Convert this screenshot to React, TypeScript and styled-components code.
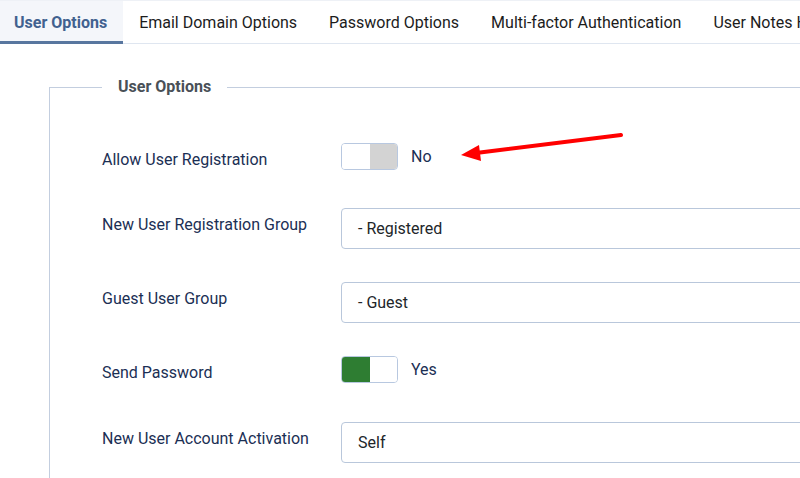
import React from "react";
import styled, { createGlobalStyle } from "styled-components";

const Global = createGlobalStyle`
  html, body { margin: 0; padding: 0; background: #fff; overflow: hidden; }
  body { font-family: Roboto, "Noto Sans", "Liberation Sans", sans-serif; }
  * { box-sizing: border-box; }
`;

const Page = styled.div`
  position: relative;
  width: 800px;
  height: 478px;
  overflow: hidden;
  background: #fff;
`;

const TabBar = styled.div`
  display: flex;
  flex-wrap: nowrap;
  height: 44px;
  border-top: 1px solid #eef1f6;
  border-bottom: 1px solid #dfe6f0;
  white-space: nowrap;
`;

const Tab = styled.div<{ $active?: boolean }>`
  flex: none;
  display: flex;
  align-items: center;
  padding: 3px 16px 0 ${(p) => (p.$active ? "14px" : "16px")};
  height: 43px;
  margin-bottom: -1px;
  font-size: 16px;
  font-weight: ${(p) => (p.$active ? 700 : 400)};
  color: ${(p) => (p.$active ? "#41618f" : "#1c1c1c")};
  background: ${(p) => (p.$active ? "#f4f6fa" : "transparent")};
  border-bottom: 3px solid ${(p) => (p.$active ? "#58769f" : "transparent")};
`;

const Content = styled.div`
  padding: 32px 0 0 49px;
`;

const Fieldset = styled.fieldset`
  margin: 0;
  width: 1000px;
  border: 1px solid #c3cedf;
  padding: 45px 0 40px 52px;
`;

const Legend = styled.legend`
  padding: 0 16px;
  font-size: 16px;
  line-height: 22px;
  font-weight: 700;
  color: #495057;
`;

const Row = styled.div<{ $switch?: boolean; $tall?: boolean }>`
  display: grid;
  grid-template-columns: 239px 1fr;
  align-items: start;
  min-height: ${(p) => (p.$switch ? (p.$tall ? "33px" : "32px") : "41px")};
  margin-bottom: 33px;
`;

const Label = styled.div`
  padding-top: 6px;
  font-size: 16px;
  line-height: 21px;
  color: #1b2f54;
`;

const SwitchWrap = styled.div`
  display: flex;
  align-items: center;
  height: 27px;
`;

const Switch = styled.div`
  display: flex;
  width: 57px;
  height: 27px;
  border: 1px solid #b8c8e0;
  border-radius: 4px;
  overflow: hidden;
`;

const Half = styled.div<{ $fill: string }>`
  flex: 1;
  background: ${(p) => p.$fill};
`;

const SwitchText = styled.span`
  margin-left: 13px;
  font-size: 16px;
  color: #1b2f54;
`;

const Select = styled.div`
  display: flex;
  align-items: center;
  width: 520px;
  height: 41px;
  padding-left: 16px;
  border: 1px solid #b9c7db;
  border-radius: 4px;
  font-size: 16px;
  color: #22262a;
  background: #fff;
`;

const Arrow = styled.svg`
  position: absolute;
  left: 0;
  top: 0;
  pointer-events: none;
`;

const Toggle = ({ on }: { on: boolean }) => (
  <SwitchWrap>
    <Switch>
      <Half $fill={on ? "#2e7d32" : "#ffffff"} />
      <Half $fill={on ? "#ffffff" : "#d3d3d3"} />
    </Switch>
    <SwitchText>{on ? "Yes" : "No"}</SwitchText>
  </SwitchWrap>
);

export default function App() {
  const tabs = [
    "User Options",
    "Email Domain Options",
    "Password Options",
    "Multi-factor Authentication",
    "User Notes History",
  ];
  return (
    <Page>
      <Global />
      <TabBar>
        {tabs.map((t, i) => (
          <Tab key={t} $active={i === 0}>
            {t}
          </Tab>
        ))}
      </TabBar>
      <Content>
        <Fieldset>
          <Legend>User Options</Legend>
          <Row $switch>
            <Label>Allow User Registration</Label>
            <Toggle on={false} />
          </Row>
          <Row>
            <Label>New User Registration Group</Label>
            <Select>- Registered</Select>
          </Row>
          <Row>
            <Label>Guest User Group</Label>
            <Select>- Guest</Select>
          </Row>
          <Row $switch $tall>
            <Label>Send Password</Label>
            <Toggle on={true} />
          </Row>
          <Row>
            <Label>New User Account Activation</Label>
            <Select>Self</Select>
          </Row>
        </Fieldset>
      </Content>
      <Arrow width="800" height="478" viewBox="0 0 800 478">
        <line x1="621" y1="135" x2="476" y2="153" stroke="#ff0000" strokeWidth="4" strokeLinecap="round" />
        <polygon points="461,155 479,145 481,161" fill="#ff0000" />
      </Arrow>
    </Page>
  );
}
